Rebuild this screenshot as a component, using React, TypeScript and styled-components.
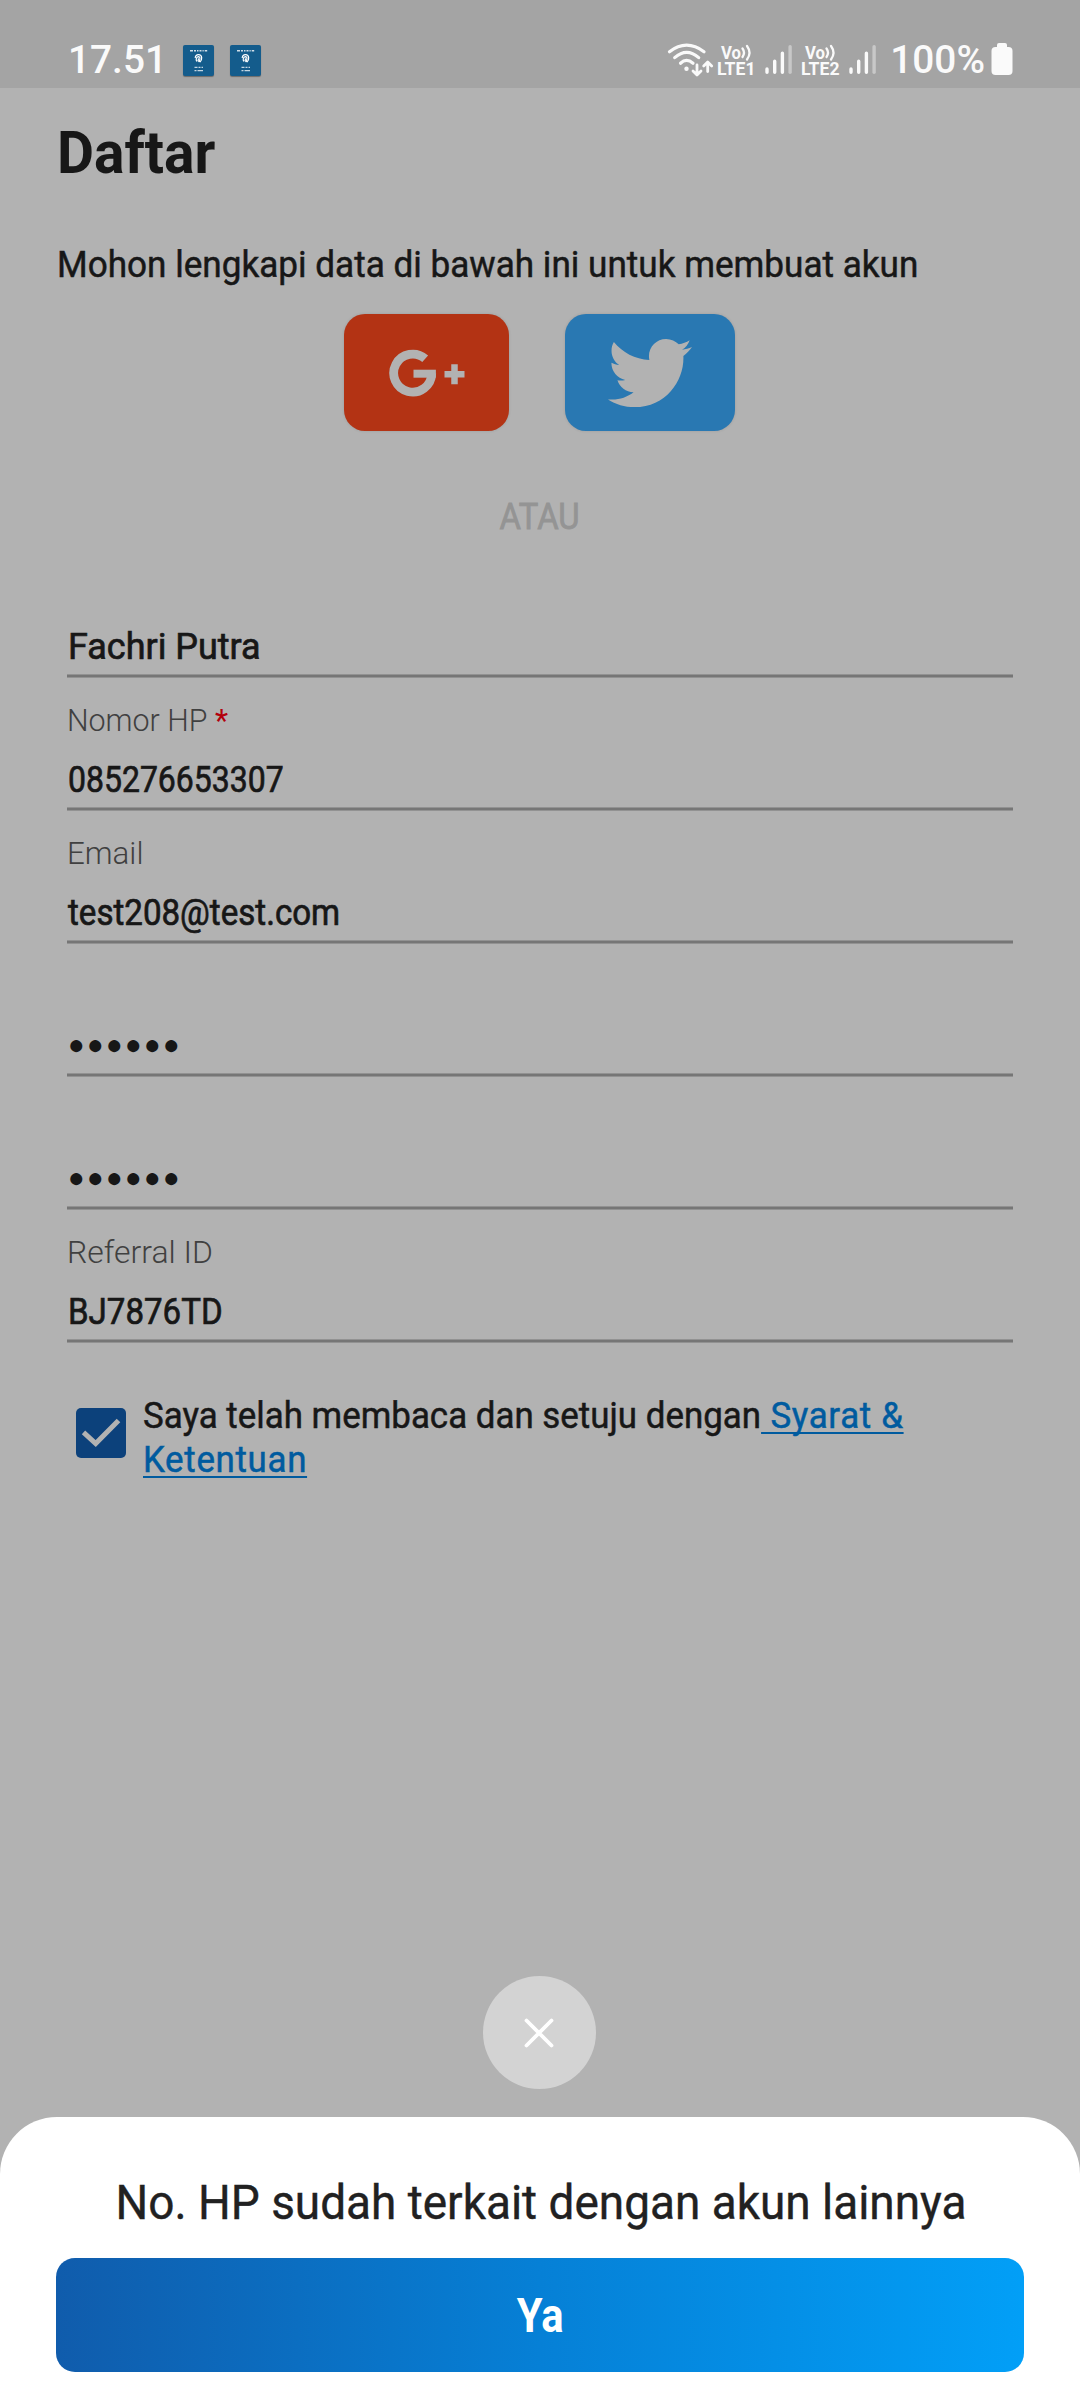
import React from 'react';
import styled, { createGlobalStyle } from 'styled-components';
import { FaTwitter } from 'react-icons/fa';

const Global = createGlobalStyle`
  *, *::before, *::after { box-sizing: border-box; }
  body { margin: 0; background: #b2b2b2; }
`;

const Screen = styled.div`
  width: 1080px;
  height: 2400px;
  display: flex;
  flex-direction: column;
  overflow: hidden;
  background: #b2b2b2;
  color: #171717;
  font-family: Roboto, 'Open Sans', sans-serif;
`;

const Fit = styled.span<{ $scale: number; $origin?: string }>`
  display: inline-block;
  white-space: nowrap;
  transform: scaleX(${(p) => p.$scale});
  transform-origin: ${(p) => p.$origin ?? 'left'} center;
`;

const StatusBar = styled.header`
  flex: none;
  height: 88px;
  padding: 36px 67px 0;
  display: flex;
  justify-content: space-between;
  background: #a4a4a4;
  color: #fafafa;
  font-size: 38.8px;
  font-weight: 500;
  line-height: 47px;
`;

const StatusGroup = styled.div`
  display: flex;
  align-items: flex-start;
`;

const Clock = styled.span`
  width: 115px;
  margin-left: 1px;
`;

const AppBadge = styled.svg`
  width: 31px;
  height: 31px;
  margin: 9px 16px 0 0;
  border-radius: 2px;
  background: #145c8c;
  box-shadow: 0 1px 1px rgba(0, 0, 0, 0.35);
`;

const RadioIcons = styled.svg`
  width: 215px;
  height: 46px;
  margin-right: 8px;
`;

const Battery = styled.svg`
  width: 22px;
  height: 34px;
  margin: 6px 0 0 6px;
`;

const Main = styled.main`
  flex: 1;
  display: flex;
  flex-direction: column;
  padding: 30px 56px 0;
`;

const Title = styled.h1`
  margin: 0 0 55px 1px;
  font-size: 59px;
  font-weight: 700;
  line-height: 70px;
`;

const Subtitle = styled.p`
  margin: 0 0 0 1px;
  font-size: 36.5px;
  font-weight: 400;
  line-height: 44px;
  -webkit-text-stroke: 0.5px currentColor;
`;

const SocialRow = styled.div`
  display: flex;
  justify-content: center;
  gap: 56px;
  margin: 27px 0 0 -1px;
`;

const SocialButton = styled.button<{ $width: number; $color: string }>`
  width: ${(p) => p.$width}px;
  height: 117px;
  padding: 0;
  border: 0;
  border-radius: 21px;
  display: flex;
  align-items: center;
  justify-content: center;
  background: ${(p) => p.$color};
  color: #b2b2b2;
  box-shadow: 0 0 3px rgba(0, 0, 0, 0.12);
`;

const Divider = styled.div`
  margin-top: 64px;
  text-align: center;
  font-size: 36.5px;
  line-height: 44px;
  font-weight: 400;
  -webkit-text-stroke: 0.8px currentColor;
  color: #949494;
`;

const Form = styled.form`
  display: flex;
  flex-direction: column;
  margin: 6px 11px 0;
`;

const Field = styled.div`
  height: 133px;
  display: flex;
  flex-direction: column;
  justify-content: flex-end;
`;

const FieldLabel = styled.label`
  font-size: 31px;
  font-weight: 300;
  line-height: 38px;
  color: #404040;
  margin-bottom: 18px;
`;

const Required = styled.span`
  color: #b3000c;
  font-weight: 400;
`;

const FieldValue = styled.div`
  height: 44px;
  padding-left: 1px;
  font-size: 36.5px;
  font-weight: 400;
  line-height: 44px;
  -webkit-text-stroke: 0.7px currentColor;
`;

const Dots = styled.div`
  height: 44px;
  padding-left: 1px;
  font-size: 28px;
  line-height: 41px;
  letter-spacing: 2.1px;
`;

const Underline = styled.div`
  height: 4px;
  margin-top: 5px;
  background: linear-gradient(#929292 0 1px, #767676 1px 3px, #929292 3px);
`;

const Terms = styled.div`
  display: flex;
  align-items: flex-start;
  margin: 51px 0 0 20px;
`;

const Checkbox = styled.span`
  flex: none;
  width: 50px;
  height: 50px;
  margin: 14px 17px 0 0;
  border-radius: 5px;
  background: #0c417b;
  display: flex;
`;

const TermsText = styled.p`
  margin: 0;
  font-size: 36.5px;
  font-weight: 400;
  line-height: 44px;
  -webkit-text-stroke: 0.5px currentColor;
`;

const Link = styled.a`
  color: #005b9f;
  white-space: pre;
  letter-spacing: 0.7px;
  text-decoration: underline;
  text-decoration-thickness: 2px;
  text-underline-offset: 4px;
  text-decoration-skip-ink: none;
`;

const CloseButton = styled.button`
  flex: none;
  align-self: center;
  width: 113px;
  height: 113px;
  margin: 0 1px 28px 0;
  padding: 0 1px 0 0;
  border: 0;
  border-radius: 50%;
  display: flex;
  align-items: center;
  justify-content: center;
  background: #d3d3d3;
`;

const Sheet = styled.section`
  flex: none;
  height: 283px;
  padding: 56px 56px 0;
  border-radius: 57px 57px 0 0;
  background: #fff;
  display: flex;
  flex-direction: column;
`;

const SheetTitle = styled.h2`
  margin: 0 0 25px 2px;
  font-size: 47.5px;
  font-weight: 400;
  line-height: 60px;
  color: #212121;
  display: flex;
  justify-content: center;
  -webkit-text-stroke: 0.4px currentColor;
`;

const Confirm = styled.button`
  height: 114px;
  padding: 2px 0 0;
  border: 0;
  border-radius: 19px;
  background: linear-gradient(90deg, #105cac, #0680d6 50%, #029ff7);
  color: #fff;
  font-family: inherit;
  font-size: 48.5px;
  font-weight: 700;
  line-height: 60px;
`;

function Badge() {
  return (
    <AppBadge viewBox="0 0 31 31" fill="none" stroke="#fff">
      <path d="M7 5.8h3M11 5.8h2M14 5.8h1.5M16.5 5.8h2M19.5 5.8h1.2M21.7 5.8h2.5" strokeWidth="1.6" opacity=".8" />
      <path d="M12.2 13c.2-2.4 1.6-3.4 3.3-3.4s3 1.2 3.2 3-.4 3.2-1.7 4.6M13.8 16.5c-1-1.5-.9-4.8 1.6-4.9 2.4 0 1.6 3.8.3 5.5M15.4 13.3c.2 1.5-.2 2.3-.6 3" strokeWidth="1.2" />
      <path d="M11.5 22.3h3M15.5 22.3h2M18.5 22.3h1.5M11.5 25.6h2M14.5 25.6h5.5" strokeWidth="1.3" opacity=".75" />
    </AppBadge>
  );
}

function Sim({ x, n }: { x: number; n: number }) {
  return (
    <g transform={`translate(${x} 0)`}>
      <text x="4" y="22.5" fontSize="18" fontWeight="700" textLength="20" lengthAdjust="spacingAndGlyphs">Vo</text>
      <g fill="none" stroke="#fafafa" strokeWidth="2.3" strokeLinecap="round">
        <path d="M25.5 12.5q3 4.2 0 8.5M30 10q5 6.8 0 13.5" />
      </g>
      <text x="0" y="39" fontSize="17.5" fontWeight="700" textLength="38.5" lengthAdjust="spacingAndGlyphs">LTE{n}</text>
      <g stroke="#fafafa" strokeWidth="3.4" strokeLinecap="round">
        <path d="M50 36.3V33M57.7 36.3V25.3M65.4 36.3V17.3" />
        <path d="M73.1 36.3V10.8" opacity=".42" />
      </g>
    </g>
  );
}

function Radio() {
  return (
    <RadioIcons viewBox="667 36 215 46" fill="#fafafa">
      <g fill="none" stroke="#fafafa" strokeWidth="3.2" strokeLinecap="round" strokeLinejoin="round">
        <path d="M669.5 51.7q17-13 34.5 0M674.7 57.6q12-10.5 24 0M680.5 63.2q6-5.5 12.5 0" />
        <path d="M697 65v9.2M693 71l4 4 4-4M707.7 71.5v-9M703.7 66l4-4 4 4" strokeWidth="2.8" />
      </g>
      <circle cx="686.5" cy="68.7" r="2.2" />
      <g transform="translate(0 36)">
        <Sim x={717} n={1} />
        <Sim x={801} n={2} />
      </g>
    </RadioIcons>
  );
}

function GoogleMark() {
  return (
    <svg width="76" height="48" viewBox="-1 -0.5 76 48" fill="none" stroke="#b2b2b2">
      <path d="M35.2 9.3A19 19 0 1 0 41.7 24" strokeWidth="8.8" />
      <path d="M23.5 24.2H45.9" strokeWidth="8" />
      <path d="M54.5 24.7H74.5M64.5 14.7V34.7" strokeWidth="6.5" />
    </svg>
  );
}

type FieldData = { label?: string; required?: boolean; labelScale?: number; value?: string; scale?: number };

const fields: FieldData[] = [
  { value: 'Fachri Putra', scale: 0.985 },
  { label: 'Nomor HP', required: true, labelScale: 0.98, value: '085276653307', scale: 0.876 },
  { label: 'Email', labelScale: 1.01, value: 'test208@test.com', scale: 0.907 },
  {},
  {},
  { label: 'Referral ID', labelScale: 1.03, value: 'BJ7876TD', scale: 0.906 },
];

export default function App() {
  return (
    <Screen>
      <Global />
      <StatusBar>
        <StatusGroup>
          <Clock>17.51</Clock>
          <Badge />
          <Badge />
        </StatusGroup>
        <StatusGroup>
          <Radio />
          <span>100%</span>
          <Battery viewBox="0 0 22 34" fill="#fafafa">
            <rect x="6" y="1" width="10" height="8" rx="2" />
            <rect x=".5" y="5" width="21" height="28" rx="4" />
          </Battery>
        </StatusGroup>
      </StatusBar>
      <Main>
        <Title><Fit $scale={0.965}>Daftar</Fit></Title>
        <Subtitle><Fit $scale={0.962}>Mohon lengkapi data di bawah ini untuk membuat akun</Fit></Subtitle>
        <SocialRow>
          <SocialButton type="button" $width={165} $color="#b33314"><GoogleMark /></SocialButton>
          <SocialButton type="button" $width={170} $color="#2978b2"><FaTwitter size={84} /></SocialButton>
        </SocialRow>
        <Divider><Fit $scale={0.9} $origin="center">ATAU</Fit></Divider>
        <Form>
          {fields.map((f, i) => (
            <Field key={i}>
              {f.label && (
                <FieldLabel>
                  <Fit $scale={f.labelScale ?? 1}>
                    {f.label}{f.required && <Required> *</Required>}
                  </Fit>
                </FieldLabel>
              )}
              {f.value ? <FieldValue><Fit $scale={f.scale ?? 1}>{f.value}</Fit></FieldValue> : <Dots>●●●●●●</Dots>}
              <Underline />
            </Field>
          ))}
        </Form>
        <Terms>
          <Checkbox>
            <svg width="50" height="50" viewBox="0 0 50 50" fill="none" stroke="#b2b2b2" strokeWidth="5">
              <path d="M7.5 24.3 19.7 35.5 42.5 12.5" />
            </svg>
          </Checkbox>
          <TermsText>
            <Fit $scale={0.956}>
              Saya telah membaca dan setuju dengan<Link> Syarat &amp;</Link>
              <br />
              <Link>Ketentuan</Link>
            </Fit>
          </TermsText>
        </Terms>
      </Main>
      <CloseButton type="button" aria-label="Tutup">
        <svg width="32" height="32" viewBox="0 0 32 32" stroke="#fff" strokeWidth="3.8" strokeLinecap="round">
          <path d="M3.5 3.5 28.5 28.5M28.5 3.5 3.5 28.5" />
        </svg>
      </CloseButton>
      <Sheet>
        <SheetTitle><Fit $scale={0.967} $origin="center">No. HP sudah terkait dengan akun lainnya</Fit></SheetTitle>
        <Confirm type="button"><Fit $scale={0.86} $origin="center">Ya</Fit></Confirm>
      </Sheet>
    </Screen>
  );
}
